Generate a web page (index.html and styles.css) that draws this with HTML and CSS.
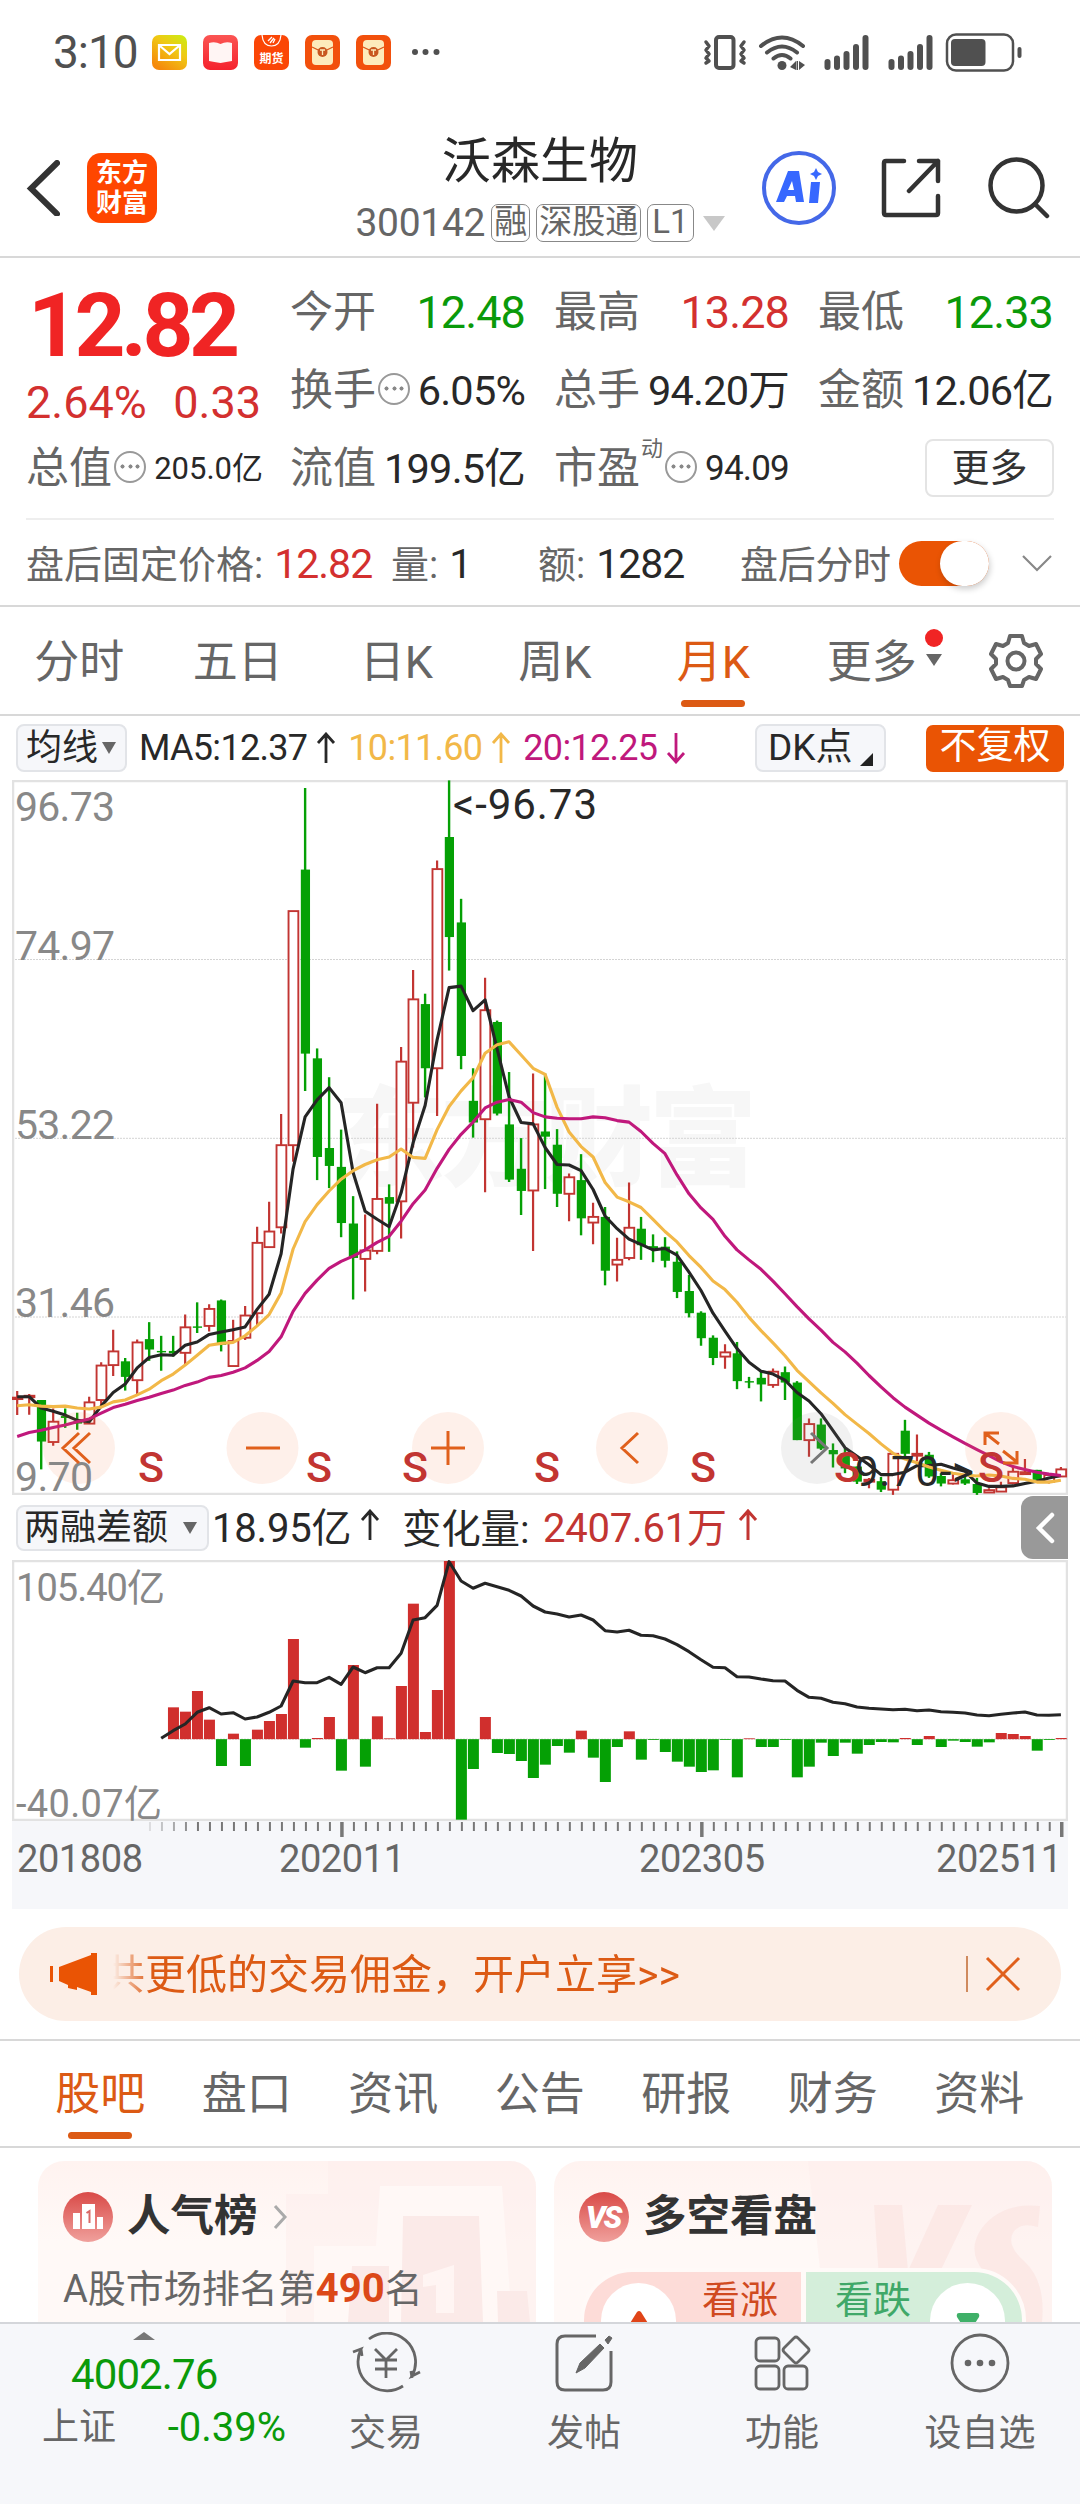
FILE: index.html
```
<!DOCTYPE html>
<html lang="zh-CN">
<head>
  <meta charset="UTF-8">
  <meta name="viewport" content="width=device-width, initial-scale=1">
  <title>沃森生物 300142</title>
  <link rel="stylesheet" href="styles.css">
</head>
<body>
  <!-- Status bar -->
  <div class="status-bar">
    <span class="clock">3:10</span>
    <div class="app-icons">
      <svg width="35" height="35" viewBox="0 0 35 35">
        <defs>
          <linearGradient id="mail" x1="1" y1="0" x2="0.3" y2="1"><stop offset="0" stop-color="#c8f014"/><stop offset="0.45" stop-color="#f0c814"/><stop offset="1" stop-color="#f58a0c"/></linearGradient>
          <linearGradient id="book" x1="0" y1="0" x2="0" y2="1"><stop offset="0" stop-color="#fb5553"/><stop offset="1" stop-color="#f5222d"/></linearGradient>
        </defs>
        <rect width="35" height="35" rx="7" fill="url(#mail)"/>
        <path d="M7 10h21v15H7zM8 11l9.500 8L27 11" fill="none" stroke="#fff" stroke-width="2.200"/>
      </svg>
      <svg width="35" height="35" viewBox="0 0 35 35">
        <rect width="35" height="35" rx="7" fill="url(#book)"/>
        <path d="M6 8q6-2 11.500 1Q23 6 29 8v18q-6 1-11.500 2Q11 27 6 26z" fill="#fff5f4"/>
      </svg>
      <svg width="35" height="35" viewBox="0 0 35 35">
        <rect width="35" height="35" rx="7" fill="#fb4606"/>
        <path d="M8 0q1 11 9.500 11T27 0" fill="none" stroke="#fff" stroke-width="1.200"/>
        <path d="M14 6l4-4M16 8l4-5M19 8l2-4" stroke="#fff" stroke-width="1.300"/>
        <text x="17.500" y="28" text-anchor="middle" font-size="12" font-weight="700" fill="#fff">期货</text>
      </svg>
      <svg width="35" height="35" viewBox="0 0 35 35">
        <rect width="35" height="35" rx="7" fill="#f2500c"/>
        <rect x="7" y="5" width="21" height="25" rx="4" fill="#fdebbb"/>
        <path d="M7 12l10.500 5L28 12" fill="none" stroke="#d9581c" stroke-width="1.300"/>
        <circle cx="17.500" cy="17" r="5" fill="#c8571f"/>
        <path d="M15 15h5M17.500 15v5" stroke="#fdebbb" stroke-width="1.300"/>
      </svg>
      <svg width="35" height="35" viewBox="0 0 35 35">
        <rect width="35" height="35" rx="7" fill="#f2500c"/>
        <rect x="7" y="5" width="21" height="25" rx="4" fill="#fdebbb"/>
        <path d="M7 12l10.500 5L28 12" fill="none" stroke="#d9581c" stroke-width="1.300"/>
        <circle cx="17.500" cy="17" r="5" fill="#c8571f"/>
        <path d="M15 15h5M17.500 15v5" stroke="#fdebbb" stroke-width="1.300"/>
      </svg>
      <svg class="more-dots" width="30" height="8" viewBox="0 0 30 8" fill="#505050"><circle cx="4" cy="4" r="3"/><circle cx="14.500" cy="4" r="3"/><circle cx="25.500" cy="4" r="3"/></svg>
    </div>
    <svg class="system-icons" width="325" height="42" viewBox="700 30 325 42" fill="#505050">
      <g fill="none" stroke="#505050" stroke-width="4" stroke-linecap="round" stroke-linejoin="round">
        <rect x="716" y="36" width="17.500" height="31" rx="3"/>
        <path d="M706 41l3 4-3 4 3 4-3 4 3 3-3 2M744 41l-3 4 3 4-3 4 3 4-3 3 3 2" stroke-width="3.500"/>
        <path d="M761 45q21-17 42 0M767 51.500q15-12 30 0M773.500 57.500q8.500-7 17 0"/>
        <rect x="947" y="33.500" width="66" height="36" rx="9" stroke-width="2.500"/>
      </g>
      <circle cx="782" cy="64.500" r="4.500"/>
      <path d="M790 66l6-6v9zM799 60l6 4-6 5zM796.500 60h1.500v9h-1.500z"/>
      <g>
        <rect x="824.500" y="58" width="6" height="11" rx="3"/><rect x="834" y="54.500" width="6" height="14.500" rx="3"/><rect x="843.500" y="50" width="6" height="19" rx="3"/><rect x="853" y="43" width="6" height="26" rx="3"/><rect x="862.500" y="34" width="6" height="35" rx="3"/>
        <rect x="888.500" y="58" width="6" height="11" rx="3"/><rect x="898" y="54.500" width="6" height="14.500" rx="3"/><rect x="907.500" y="50" width="6" height="19" rx="3"/><rect x="917" y="43" width="6" height="26" rx="3"/><rect x="926.500" y="34" width="6" height="35" rx="3"/>
      </g>
      <rect x="951" y="38" width="34.500" height="27" rx="4"/>
      <rect x="1017.500" y="46" width="4" height="11" rx="2"/>
    </svg>
  </div>

  <!-- Header -->
  <header class="header">
    <div class="header-left">
      <svg width="34" height="56" viewBox="0 0 34 56"><path d="M31 3L5 28.500 31 54" fill="none" stroke="#333" stroke-width="6" stroke-linecap="round"/></svg>
      <div class="brand"><span>东方</span><span>财富</span></div>
    </div>
    <div class="header-title">
      <h1>沃森生物</h1>
      <div class="code-row">
        <span class="code">300142</span>
        <span class="tag">融</span><span class="tag">深股通</span><span class="tag tag-l1">L1</span>
        <i class="tri tri-light"></i>
      </div>
    </div>
    <div class="header-right">
      <svg width="74" height="74" viewBox="0 0 74 74">
        <circle cx="37" cy="37" r="35" fill="none" stroke="#4468e8" stroke-width="4"/>
        <path fill="#3768ff" fill-rule="evenodd" d="M26 20h11l5 31h-8l-1-6h-8l-3 6h-8zM30 30l-4 9h6zM49 31h9l-2 21h-9zM54 17l2 4 4 2-4 2-2 4-2-4-4-2 4-2z"/>
      </svg>
      <svg width="60" height="60" viewBox="0 0 60 60" fill="none" stroke="#333" stroke-width="4.500" stroke-linecap="round" stroke-linejoin="round"><path d="M23 3H5q-2 0-2 2v50q0 2 2 2h50q2 0 2-2V38M38 3h19v20M57 3L28 33"/></svg>
      <svg width="62" height="62" viewBox="0 0 62 62" fill="none" stroke="#333" stroke-width="4.500" stroke-linecap="round"><circle cx="28.500" cy="28.500" r="26"/><path d="M47 47l12 12"/></svg>
    </div>
  </header>

  <!-- Quote -->
  <section class="quote">
    <div class="quote-grid">
      <div class="price">
        <div class="price-main">12.82</div>
        <div class="price-change"><span>2.64%</span><span>0.33</span></div>
      </div>
      <div class="cell"><label>今开</label><b class="green big">12.48</b></div>
      <div class="cell"><label>最高</label><b class="red big">13.28</b></div>
      <div class="cell"><label>最低</label><b class="green big">12.33</b></div>
      <div class="cell"><label>换手<i class="info"></i></label><b>6.05%</b></div>
      <div class="cell"><label>总手</label><b>94.20万</b></div>
      <div class="cell"><label>金额</label><b>12.06亿</b></div>
      <div class="cell"><label>总值<i class="info"></i></label><b class="small">205.0亿</b></div>
      <div class="cell"><label>流值</label><b>199.5亿</b></div>
      <div class="cell"><label>市盈<sup>动</sup><i class="info"></i></label><b class="mid">94.09</b></div>
      <div class="cell cell-more"><button class="more-btn">更多</button></div>
    </div>
    <div class="after-row">
      <div>盘后固定价格:<b class="red">12.82</b></div>
      <div>量:<b>1</b></div>
      <div>额:<b>1282</b></div>
      <div class="tight">盘后分时</div>
      <div><span class="switch"></span></div>
      <svg width="32" height="20" viewBox="0 0 32 20"><path d="M2 3l14 14L30 3" fill="none" stroke="#888" stroke-width="2.200"/></svg>
    </div>
  </section>

  <!-- Period tabs -->
  <nav class="period-tabs">
    <span>分时</span><span>五日</span><span>日K</span><span>周K</span><span class="active">月K</span>
    <span class="with-badge">更多<i class="badge"></i><i class="tri tri-badge"></i></span>
    <svg width="54" height="56" viewBox="0 0 54 56" fill="none" stroke="#666" stroke-width="4" stroke-linejoin="round"><path d="M21 3h12l2 7 5 3 7-2 5 10-5 5v5l5 5-5 10-7-2-5 3-2 6H21l-2-6-5-3-7 2-5-10 5-5v-5l-5-5 5-10 7 2 5-3z"/><circle cx="27" cy="28" r="8.500"/></svg>
  </nav>

  <!-- Moving averages -->
  <div class="ma-row">
    <span class="pill">均线<i class="tri"></i></span>
    <div class="ma-values">
      <span>MA5:12.37<svg class="arrow" viewBox="0 0 20 32"><path d="M10 31V2M2 11l8-9 8 9"/></svg></span>
      <span class="ma10">10:11.60<svg class="arrow" viewBox="0 0 20 32"><path d="M10 31V2M2 11l8-9 8 9"/></svg></span>
      <span class="ma20">20:12.25<svg class="arrow" viewBox="0 0 20 32"><path d="M10 1v29M2 21l8 9 8-9"/></svg></span>
    </div>
    <span class="pill pill-dk">DK点<i class="corner"></i></span>
    <span class="pill-orange">不复权</span>
  </div>

  <svg class="plot" id="kline" width="1056" height="715" viewBox="12 780 1056 715"></svg>

  <div class="indicator-row">
    <span class="pill">两融差额<i class="tri"></i></span>
    <span class="balance">18.95亿<svg class="arrow" viewBox="0 0 20 32"><path d="M10 31V2M2 11l8-9 8 9"/></svg></span>
    <span class="delta-label">变化量:</span>
    <span class="delta">2407.61万<svg class="arrow" viewBox="0 0 20 32"><path d="M10 31V2M2 11l8-9 8 9"/></svg></span>
    <span class="drawer"><svg width="20" height="32" viewBox="0 0 20 32"><path d="M17 3L4 16l13 13" fill="none" stroke="#fff" stroke-width="4.500" stroke-linecap="round"/></svg></span>
  </div>

  <svg class="plot" id="margin" width="1056" height="261" viewBox="12 1560 1056 261"></svg>
  <svg class="plot axis" id="axis" width="1056" height="88" viewBox="12 1821 1056 88"></svg>

  <!-- Promo -->
  <div class="promo">
    <svg width="48" height="42" viewBox="0 0 48 42" fill="#ea5404"><path d="M0 13h3v16H0zM9 14L41 2V0h6v42h-6v-3l-14-5v3l-9-2v-3l-9-4z"/></svg>
    <div class="promo-text">共更低的交易佣金，开户立享&gt;&gt;</div>
    <div class="promo-close"><svg width="36" height="36" viewBox="0 0 36 36"><path d="M2 2l32 32M34 2L2 34" stroke="#e0601c" stroke-width="3"/></svg></div>
  </div>

  <!-- Content tabs -->
  <nav class="content-tabs">
    <span class="active">股吧</span><span>盘口</span><span>资讯</span><span>公告</span><span>研报</span><span>财务</span><span>资料</span>
  </nav>

  <div class="cards">
    <div class="card">
      <svg class="card-bg" width="260" height="161" viewBox="0 0 260 161">
        <path d="M52 0h208v161H10V33h42z" fill="#fdeeec" opacity="0.6"/>
        <path d="M104 25h122l10 136H38V85h62z" fill="#fff8f6"/>
        <path d="M127 55h76l4 106h-82zM76 105h37v56H72zM221 130h30l3 31h-32z" fill="#fbeae8"/>
        <path d="M178 104v48h-18v-28l-13 2v-12z" fill="#fff5f3"/>
      </svg>
      <div class="card-head">
        <svg width="50" height="50" viewBox="0 0 50 50">
          <defs><linearGradient id="rank" x1="0" y1="0" x2="0" y2="1"><stop offset="0" stop-color="#d94a47"/><stop offset="1" stop-color="#f0a09c"/></linearGradient></defs>
          <circle cx="25" cy="25" r="25" fill="url(#rank)"/>
          <path d="M10 21h7v16h-7zM19 12h13v25H19zM34 25h6v12h-6z" fill="#fff"/>
          <path d="M23.500 21l3-2v12" fill="none" stroke="#d96a67" stroke-width="2"/>
        </svg>
        <h2>人气榜</h2>
        <svg width="16" height="26" viewBox="0 0 16 26"><path d="M3 2l10 11L3 24" fill="none" stroke="#aaa" stroke-width="3"/></svg>
      </div>
      <p class="card-sub">A股市场排名第<b>490</b>名</p>
    </div>
    <div class="card">
      <svg class="card-bg" width="260" height="161" viewBox="0 0 260 161">
        <path d="M16 0h244v161H34z" fill="#fdeeec" opacity="0.6"/>
        <path d="M82 44h28l6 66 30-66h34l-56 117H90z" fill="#fbe6e4" opacity="0.8"/>
        <path d="M246 66q-20-6-26 8-4 12 12 26 22 20 18 61h-84q24 0 34-14 10-18-8-36-18-22-2-44 20-26 58-22z" fill="#fbe6e4" opacity="0.8"/>
      </svg>
      <div class="card-head">
        <svg width="50" height="50" viewBox="0 0 50 50">
          <circle cx="25" cy="25" r="25" fill="url(#rank)"/>
          <text x="24" y="36" text-anchor="middle" font-size="31" font-weight="900" font-style="italic" letter-spacing="-2" fill="#fff">VS</text>
        </svg>
        <h2>多空看盘</h2>
      </div>
      <div class="vote">
        <div class="vote-side up"><i class="knob"><svg width="24" height="22" viewBox="0 0 24 22"><path d="M10 2q2-2 4 0l10 16H0z" fill="#e04418"/></svg></i>看涨</div>
        <div class="vote-side down">看跌<i class="knob"><svg width="24" height="20" viewBox="0 0 24 20"><path d="M3 0h18q3 0 2 4L14 18h-4L1 4Q0 0 3 0z" fill="#3fb068"/></svg></i></div>
      </div>
    </div>
  </div>

  <!-- Bottom bar -->
  <footer class="bottom-bar">
    <div class="index">
      <i class="tri tri-up"></i>
      <div class="index-value">4002.76</div>
      <div class="index-row"><span>上证</span><b>-0.39%</b></div>
    </div>
    <div class="action">
      <svg width="70" height="62" viewBox="0 0 70 62" fill="none" stroke="#666" stroke-width="2.800"><path d="M18 7a29 29 0 0 1 43 37l8-4M61 46l-1-7M52 54A29 29 0 0 1 10 17L2 20M10 17l1 7M24 17l11 11 11-11M35 28v18M24 28h22M24 37h22"/></svg>
      <span>交易</span>
    </div>
    <div class="action">
      <svg width="60" height="62" viewBox="0 0 60 62" fill="none" stroke="#666" stroke-width="3"><path d="M42 4H11q-8 0-8 8v38q0 8 8 8h38q8 0 8-8V19"/><path d="M22 41l4-10 20-19 4 4-19 20zM51 8l4-4 3 2-4 6z" fill="#666" stroke-width="1"/></svg>
      <span>发帖</span>
    </div>
    <div class="action">
      <svg width="60" height="62" viewBox="0 0 60 62" fill="none" stroke="#666" stroke-width="2.800"><rect x="4" y="6" width="23" height="23" rx="4"/><rect x="4" y="34" width="23" height="23" rx="4"/><rect x="32" y="34" width="23" height="23" rx="4"/><path d="M42 6q2-2 4 0l10 10q2 2 0 4L46 30q-2 2-4 0L32 20q-2-2 0-4z"/></svg>
      <span>功能</span>
    </div>
    <div class="action">
      <svg width="62" height="62" viewBox="0 0 62 62"><circle cx="31" cy="31" r="28" fill="none" stroke="#666" stroke-width="2.800"/><g fill="#666"><circle cx="19" cy="31" r="3.300"/><circle cx="31" cy="31" r="3.300"/><circle cx="43" cy="31" r="3.300"/></g></svg>
      <span>设自选</span>
    </div>
  </footer>

  <script src="chart.js"></script>
</body>
</html>
```
FILE: styles.css
```
*, *::before, *::after { margin: 0; padding: 0; box-sizing: border-box; }
body {
  width: 1080px;
  height: 2504px;
  overflow: hidden;
  background: #fff;
  color: #666;
  font-family: Roboto, "Noto Sans CJK SC", sans-serif;
  white-space: nowrap;
}
svg { display: block; flex: none; }
i { font-style: normal; }
.red { color: #d3302f; }
.green { color: #0a9a0a; }

/* Small triangles */
.tri {
  display: block;
  flex: none;
  border: 7px solid transparent;
  border-top: 12px solid #666;
  border-bottom: 0;
}
.tri-light {
  border-width: 15px 11px 0;
  border-top-color: #c8c8c8;
}

/* Status bar */
.status-bar {
  display: flex;
  align-items: center;
  height: 104px;
  padding: 0 55px 0 53px;
  color: #505050;
}
.clock {
  width: 99px;
  font-size: 46px;
  letter-spacing: -1px;
}
.app-icons {
  display: flex;
  align-items: center;
  gap: 16px;
}
.more-dots { margin-left: 4px; }
.system-icons { margin-left: auto; }

/* Header */
.header {
  display: grid;
  grid-template-columns: 328px 1fr 328px;
  height: 154px;
  border-bottom: 2px solid #d8d8d8;
}
.header-left {
  display: flex;
  align-items: center;
  gap: 27px;
  padding: 15px 0 0 26px;
}
.brand {
  display: flex;
  flex-direction: column;
  align-items: center;
  justify-content: center;
  width: 70px;
  height: 70px;
  border-radius: 14px;
  background: #ff4600;
  color: #fff;
  font-size: 26px;
  font-weight: 700;
  line-height: 30px;
}
.header-title {
  display: flex;
  flex-direction: column;
  align-items: center;
}
.header-title h1 {
  margin-top: 28px;
  color: #282828;
  font-size: 49px;
  font-weight: 400;
  line-height: 60px;
}
.code-row {
  display: flex;
  align-items: center;
  gap: 6px;
  height: 40px;
  margin-top: 11px;
}
.code { font-size: 39px; letter-spacing: -0.300px; }
.tag {
  height: 38px;
  padding: 0 2px;
  border: 1.500px solid #888;
  border-radius: 7px;
  font-size: 33px;
  line-height: 34px;
}
.tag-l1 { padding: 0 4px; }
.code-row .tri { margin-left: 3px; }
.header-right {
  display: flex;
  align-items: center;
  padding: 15px 0 0 10px;
}
.header-right svg:nth-child(2) { margin: 0 47px 0 45px; }

/* Quote */
.quote {
  height: 349px;
  padding: 16px 26px 0;
  border-bottom: 2px solid #d8d8d8;
}
.quote-grid {
  display: grid;
  grid-template-columns: repeat(4, 235px);
  grid-template-rows: repeat(3, 78px);
  column-gap: 29px;
}
.price {
  grid-row: span 2;
  color: #d3302f;
}
.price-main {
  height: 105px;
  padding-left: 2px;
  color: #f02424;
  font-size: 89px;
  font-weight: 700;
  letter-spacing: -4.500px;
  line-height: 103px;
}
.price-change {
  display: flex;
  justify-content: space-between;
  font-size: 45px;
  line-height: 48px;
}
.cell {
  display: flex;
  align-items: center;
  justify-content: space-between;
  line-height: 78px;
}
.cell label {
  display: flex;
  align-items: center;
  font-size: 43px;
  line-height: 74px;
  margin-top: -3px;
}
.cell b {
  color: #282828;
  font-size: 41.500px;
  font-weight: 400;
  letter-spacing: -0.800px;
}
.cell b.big { font-size: 45px; letter-spacing: -0.900px; }
.cell b.green { color: #0a9a0a; }
.cell b.red { color: #d3302f; }
.cell b.small { margin-right: -2px; font-size: 31px; letter-spacing: 0; }
.cell b.mid { font-size: 35px; }
.cell sup {
  align-self: flex-start;
  margin: -4px 0 0 1px;
  font-size: 22px;
  line-height: 44px;
}
.info {
  display: block;
  width: 32px;
  height: 32px;
  margin: -2px 0 0 2px;
  border: 2px solid #999;
  border-radius: 50%;
  background: radial-gradient(circle, #888 1.800px, transparent 2.300px) center / 7px 7px no-repeat,
    radial-gradient(circle, #888 1.800px, transparent 2.300px) 3px center / 7px 7px no-repeat,
    radial-gradient(circle, #888 1.800px, transparent 2.300px) 18px center / 7px 7px no-repeat;
}
.cell-more { justify-content: flex-end; }
.more-btn {
  width: 129px;
  height: 58px;
  margin: -3px -1px 0 0;
  border: 2px solid #e4e4e4;
  border-radius: 8px;
  background: #fff;
  color: #333;
  font: 38px/50px Roboto, "Noto Sans CJK SC", sans-serif;
}
.after-row {
  display: grid;
  grid-template-columns: 365px 147px 202px 159px 122px 32px;
  align-items: center;
  height: 88px;
  margin-top: 10px;
  border-top: 2px solid #eee;
  font-size: 38px;
}
.after-row div:not(:nth-child(5)) { margin-top: -3px; }
.after-row b {
  margin-left: 11px;
  font-size: 41px;
  font-weight: 400;
  letter-spacing: -1px;
}
.after-row b:not(.red) { color: #282828; }
.after-row .tight { letter-spacing: -0.300px; }
.switch {
  display: block;
  width: 90px;
  height: 45px;
  border-radius: 23px;
  background: #ea5404;
  padding-left: 41px;
}
.switch::after {
  content: "";
  display: block;
  width: 49px;
  height: 45px;
  border-radius: 23px;
  background: #fff;
  box-shadow: 1px 3px 6px rgba(0, 0, 0, 0.2);
}

/* Period tabs */
.period-tabs {
  display: flex;
  align-items: center;
  height: 109px;
  border-bottom: 2px solid #d8d8d8;
  font-size: 45px;
}
.period-tabs span, .content-tabs span {
  position: relative;
  width: 158.500px;
  text-align: center;
  line-height: 107px;
}
.period-tabs span { line-height: 112px; height: 107px; }
.period-tabs .active, .content-tabs .active { color: #dc5a14; }
.active::after {
  content: "";
  position: absolute;
  left: 50%;
  bottom: 7px;
  width: 64px;
  height: 7px;
  margin-left: -32px;
  border-radius: 4px;
  background: #dc5a14;
}
.period-tabs .active::after { bottom: 7px; }
.period-tabs svg { margin-left: 38px; }
.badge {
  position: absolute;
  top: 22px;
  right: 8px;
  width: 18px;
  height: 18px;
  border-radius: 50%;
  background: #f02424;
}
.tri-badge {
  position: absolute;
  top: 47px;
  right: 9px;
  border-width: 12px 8px 0;
}

/* Average row */
.ma-row {
  display: flex;
  align-items: center;
  height: 64px;
  padding-left: 16px;
  color: #282828;
  font-size: 36px;
}
.pill {
  display: flex;
  flex: none;
  align-items: center;
  gap: 4px;
  height: 48px;
  padding: 0 8px;
  border: 2px solid #e2e4e8;
  border-radius: 8px;
  background: #f6f7fa;
  color: #282828;
  font-size: 36px;
  line-height: 42px;
}
.ma-row .pill:first-child { width: 111px; }
.ma-values {
  display: flex;
  flex: none;
  width: 628px;
  padding-left: 12px;
  letter-spacing: -0.700px;
}
.ma-values span {
  display: flex;
  align-items: center;
  margin-right: 12px;
}
.arrow {
  width: 20px;
  height: 32px;
  margin-left: 9px;
  fill: none;
  stroke: currentColor;
  stroke-width: 2.800;
}
.ma10 { color: #f2b848; }
.ma20 { color: #c0187c; }
.pill-dk { width: 131px; padding: 0 4px 0 11px; gap: 7px; font-size: 37px; }
.corner {
  align-self: flex-end;
  margin-bottom: 4px;
  border-left: 13px solid transparent;
  border-bottom: 13px solid #222;
}
.pill-orange {
  width: 138px;
  height: 47px;
  margin-left: 40px;
  border-radius: 7px;
  background: #ea5404;
  color: #fff;
  font-size: 37px;
  line-height: 43px;
  text-align: center;
}

/* Plots */
.plot { margin-left: 12px; }
.plot .frame { fill: none; stroke: #e2e2e2; stroke-width: 2.500; }
.plot .grid { stroke: #d4d4d4; stroke-width: 1; stroke-dasharray: 2 1; }
.plot .scale { fill: #888; font-size: 41px; }
.plot .scale.unit { font-size: 38px; }
.plot .mark { fill: #282828; font-size: 42px; }
.plot .signal { fill: #c23532; font-size: 43px; font-weight: 500; text-anchor: middle; }
.plot .watermark { fill: #f7f7f7; font-size: 108px; font-weight: 900; }
.plot .line { fill: none; stroke-width: 3.100; stroke-linejoin: round; }
.plot .tool { fill: none; stroke: #e0601c; stroke-width: 3; }
.plot .tool.off { stroke: #777; }
.plot .date { fill: #666; font-size: 38px; }
.axis { background: #f6f7fa; }

/* Indicator row */
.indicator-row {
  display: flex;
  align-items: center;
  height: 65px;
  padding-left: 16px;
  color: #282828;
  font-size: 40px;
}
.indicator-row .pill {
  width: 193px;
  height: 46px;
  padding: 0 6px;
  gap: 15px;
}
.balance, .delta { display: flex; align-items: center; }
.balance, .delta, .delta-label { margin-top: -5px; letter-spacing: -0.200px; }
.balance { width: 190px; margin-left: 3px; }
.delta-label { width: 141px; margin-left: 0; font-size: 39.500px; }
.delta { color: #c23532; }
.delta .arrow { margin-left: 11px; stroke-width: 3; }
.drawer {
  display: flex;
  align-items: center;
  justify-content: center;
  width: 47px;
  height: 63px;
  margin: 0 12px 0 auto;
  border-radius: 12px 0 0 12px;
  background: #999;
}

/* Promo */
.promo {
  display: flex;
  align-items: center;
  height: 94px;
  margin: 18px 19px;
  padding: 0 40px 0 31px;
  border-radius: 48px;
  background: #fceee6;
  color: #dc5a14;
}
.promo-text {
  margin: -7px 0 0 15px;
  overflow: hidden;
  font-size: 41px;
  text-indent: -9px;
  -webkit-mask-image: linear-gradient(90deg, transparent, #000 38px);
  mask-image: linear-gradient(90deg, transparent, #000 38px);
}
.promo-close {
  margin-left: auto;
  padding-left: 17px;
  border-left: 2px solid #cf8a5e;
}

/* Content tabs */
.content-tabs {
  display: flex;
  height: 109px;
  padding-left: 27px;
  border-top: 2px solid #d8d8d8;
  border-bottom: 2px solid #d8d8d8;
  font-size: 45px;
}
.content-tabs span { width: 146.500px; }

/* Cards */
.cards {
  display: flex;
  gap: 18px;
  height: 174px;
  padding: 13px 0 0 38px;
  overflow: hidden;
}
.card {
  position: relative;
  flex: none;
  width: 498px;
  height: 220px;
  padding: 31px 26px 0 25px;
  overflow: hidden;
  border-radius: 26px;
  background: linear-gradient(#fff3f0, #fff9f7 80px);
}
.card-bg {
  position: absolute;
  top: 0;
  right: 0;
}
.card-head {
  position: relative;
  display: flex;
  align-items: center;
  gap: 14px;
  height: 50px;
}
.card-head h2 {
  color: #333;
  font-size: 43.500px;
  font-weight: 700;
  line-height: 50px;
}
.card-sub {
  position: relative;
  margin-top: 20px;
  font-size: 38px;
  line-height: 54px;
}
.card-sub b { color: #dc4818; font-size: 40px; }
.vote {
  position: relative;
  display: flex;
  gap: 5px;
  width: 446px;
  height: 104px;
  margin: 26px 0 0 1px;
  border: 4px solid #fffaf8;
  border-radius: 52px;
  background: #fffaf8;
  font-size: 38px;
}
.vote-side {
  display: flex;
  flex: 1;
  padding: 11px 17px;
  line-height: 34px;
}
.up { gap: 26px; border-radius: 48px 0 0 48px; background: #fddcd8; color: #d04a20; }
.down { justify-content: flex-end; gap: 19px; border-radius: 0 48px 48px 0; background: #d4eeda; color: #3fa868; }
.knob {
  display: flex;
  justify-content: center;
  width: 75px;
  height: 75px;
  padding-top: 27px;
  border-radius: 50%;
  background: #fff;
}
.down .knob { padding-top: 30px; }

/* Bottom bar */
.bottom-bar {
  display: flex;
  height: 183px;
  border-top: 2px solid #d4d6da;
  background: #f6f7fa;
}
.index {
  width: 287px;
  color: #0a9a0a;
}
.tri-up {
  width: 0;
  margin: 8px 0 0 133px;
  border-width: 0 11px 8px;
  border-bottom: 8px solid #777;
}
.index-value {
  margin-top: 11px;
  padding-left: 71px;
  font-size: 42px;
  letter-spacing: -0.900px;
  line-height: 48px;
}
.index-row {
  display: flex;
  justify-content: space-between;
  margin-top: 4px;
  padding: 0 1px 0 42px;
  font-size: 37px;
  line-height: 50px;
}
.index-row span { color: #666; }
.index-row b { font-size: 40px; font-weight: 400; }
.action {
  display: flex;
  flex-direction: column;
  align-items: center;
  width: 198px;
  padding-top: 8px;
  font-size: 37px;
}
.action span { margin-top: 13px; line-height: 54px; }
```
FILE: chart.js
```
const RED = '#c23532';
const GREEN = '#05a005';
const STEP = 11.997;
const xAt = i => 17.2 + STEP * i;
const yMain = v => 770 + v / 2.119;
const ySub = v => 1480 + v / 3;

// One row per month from 201808: [direction, body top, body bottom, high, low]
const candles = [
  ['r',1330,1333,1316,1367],['r',1326,1329,1322,1366],['g',1335,1423,1335,1482],['r',1381,1424,1353,1432],
  ['g',1369,1373,1353,1394],['g',1381,1385,1362,1398],['r',1340,1385,1328,1385],['r',1262,1335,1255,1350],
  ['r',1232,1261,1186,1284],['g',1253,1286,1246,1315],['r',1213,1293,1207,1322],['g',1206,1228,1170,1252],
  ['g',1231,1234,1199,1273],['g',1231,1236,1199,1243],['r',1181,1235,1154,1262],['g',1179,1182,1128,1193],
  ['r',1142,1178,1132,1190],['g',1124,1218,1122,1232],['r',1210,1263,1165,1263],['r',1156,1203,1136,1208],
  ['r',1002,1151,968,1178],['r',978,1011,915,1013],['r',795,969,729,982],['r',299,795,299,830],
  ['g',211,601,38,680],['g',611,820,590,869],['g',801,839,651,886],['g',841,960,762,990],
  ['g',961,1034,903,1122],['r',1018,1036,942,1105],['r',909,1019,707,1026],['g',905,919,878,1021],
  ['r',618,914,587,993],['r',486,705,424,800],['g',496,632,474,694],['r',210,632,192,733],
  ['g',142,354,22,425],['g',323,606,273,634],['g',701,747,632,779],['r',509,740,440,895],
  ['g',534,728,531,732],['g',751,868,640,873],['g',845,892,780,943],['r',751,891,643,1019],
  ['g',766,777,643,888],['g',794,898,761,926],['r',863,898,855,956],['g',869,950,814,986],
  ['r',947,959,917,1005],['g',947,1061,926,1092],['r',1038,1048,991,1084],['r',970,1034,874,1039],
  ['g',972,1007,947,1038],['g',1009,1013,984,1043],['g',1010,1040,990,1054],['g',1042,1106,1020,1119],
  ['g',1104,1151,1070,1160],['g',1150,1204,1147,1220],['g',1203,1246,1198,1261],['r',1234,1243,1217,1269],
  ['g',1236,1295,1212,1312],['g',1295,1298,1286,1310],['g',1288,1302,1272,1338],['r',1275,1303,1268,1309],
  ['g',1276,1298,1264,1335],['g',1298,1420,1295,1420],['r',1386,1420,1374,1455],['g',1387,1438,1374,1441],
  ['g',1441,1450,1427,1478],['g',1448,1480,1437,1490],['g',1476,1508,1476,1513],['r',1504,1508,1500,1522],
  ['g',1507,1525,1498,1530],['r',1449,1525,1449,1536],['g',1400,1449,1377,1460],['r',1449,1453,1408,1465],
  ['g',1451,1497,1445,1500],['g',1496,1512,1490,1518],['r',1505,1512,1490,1514],['g',1503,1512,1495,1515],
  ['g',1513,1532,1500,1536],['r',1526,1531,1522,1532],['r',1520,1529,1508,1530],['r',1487,1511,1477,1514],
  ['r',1488,1492,1460,1494],['g',1483,1504,1483,1505],['r',1494,1508,1490,1512],['r',1482,1497,1477,1498]
];

const ma5 = [1328,1328,1352,1359,1367,1378,1381,1348,1319,1301,1267,1245,1239,1240,1219,1212,1196,1191,1186,1180,1143,1111,1025,845,735,699,673,705,853,935,952,968,896,790,711,572,461,458,510,487,591,693,747,750,800,836,837,849,889,945,972,994,1005,1017,1014,1028,1064,1103,1151,1189,1226,1255,1274,1280,1293,1319,1337,1364,1400,1436,1454,1472,1493,1493,1488,1474,1474,1471,1479,1486,1511,1518,1518,1517,1512,1507,1500,1495];
const ma10 = [1347,1345,1348,1349,1348,1352,1354,1350,1339,1335,1324,1312,1294,1280,1261,1240,1219,1215,1213,1199,1178,1154,1108,1015,957,921,892,867,849,836,826,820,803,821,823,762,713,680,652,600,582,576,604,632,645,715,767,798,820,874,905,915,927,952,978,1000,1029,1054,1083,1101,1128,1160,1188,1214,1241,1272,1296,1320,1342,1366,1386,1406,1428,1448,1460,1468,1477,1484,1490,1494,1496,1494,1496,1501,1503,1509,1509,1505];
const ma20 = [1412,1404,1399,1393,1388,1381,1375,1363,1351,1344,1336,1329,1321,1314,1304,1297,1287,1283,1276,1267,1251,1232,1201,1147,1109,1081,1056,1041,1030,1017,1001,988,956,919,890,844,804,772,746,716,704,698,704,726,735,738,739,739,735,737,743,746,766,791,813,858,898,928,952,988,1017,1038,1058,1083,1110,1137,1163,1187,1213,1233,1257,1283,1307,1330,1350,1367,1384,1399,1413,1427,1440,1453,1466,1476,1482,1488,1492,1495];

// Margin balance starts at month 12, monthly change at month 13
const balance = [775,752,732,697,683,702,698,717,711,697,678,603,608,608,592,613,561,578,563,563,520,420,413,376,245,303,325,310,320,331,348,378,396,402,411,405,420,452,456,451,466,467,477,494,515,539,562,563,590,591,597,602,603,631,652,655,667,671,681,685,687,689,688,692,690,695,697,699,705,707,703,699,696,705,706,704];
const change = [682,695,633,719,858,761,858,749,723,702,477,803,774,711,872,555,860,709,775,618,371,756,630,243,1019,867,711,819,822,843,894,854,798,818,752,833,906,801,754,839,780,816,845,860,876,871,780,892,775,801,801,780,892,860,788,828,788,821,795,786,787,774,795,768,801,782,786,800,787,759,762,768,812,780,774];

const polyline = (values, start, y, color) =>
  `<polyline class="line" stroke="${color}" points="${values.map((v, i) => xAt(i + start).toFixed(1) + ',' + y(v).toFixed(1)).join(' ')}"/>`;

function candle([dir, top, bottom, high, low], i) {
  const x = xAt(i), t = yMain(top), b = yMain(bottom);
  if (dir === 'g') {
    return `<path d="M${x} ${yMain(high)}V${yMain(low)}" stroke="${GREEN}" stroke-width="2.4"/><rect x="${x - 4.3}" y="${t}" width="9.2" height="${b - t}" fill="${GREEN}"/>`;
  }
  return `<path d="M${x} ${yMain(high)}V${t}M${x} ${b}V${yMain(low)}" stroke="${RED}" stroke-width="2.2"/><rect x="${x - 4.6}" y="${t}" width="9.8" height="${b - t}" fill="#fff" stroke="${RED}" stroke-width="1.9"/>`;
}

function drawKline() {
  let out = '<text class="watermark" x="337" y="1177" textLength="420">东方财富</text>';
  [959.5, 1138.3, 1317].forEach(y => { out += `<path class="grid" d="M12 ${y}H1068"/>`; });
  out += '<rect class="frame" x="13" y="781" width="1054" height="713"/>';
  out += candles.map(candle).join('');
  out += polyline(ma5, 0, yMain, '#252525') + polyline(ma10, 0, yMain, '#f2b848') + polyline(ma20, 0, yMain, '#c0187c');
  [79, 262.5, 448, 632, 817, 1001].forEach((x, i) => {
    out += `<circle cx="${x}" cy="1448" r="36" fill="${i === 4 ? '#808080' : '#f47a3c'}" opacity="0.11"/>`;
  });
  [['96.73', 821], ['74.97', 960], ['53.22', 1139], ['31.46', 1317]].forEach(([t, y]) => {
    out += `<text class="scale" x="15" y="${y}" textLength="100">${t}</text>`;
  });
  out += '<text class="scale" x="15" y="1491" textLength="78">9.70</text>';
  out += '<path class="tool" d="M79 1433l-16 15 16 15M90 1433l-16 15 16 15M246 1448h34M431 1448h34M448 1431v34M638 1433l-16 15 16 15M999 1444l-14-11M985 1445v-12h14M1003 1451l14 11M1017 1451v12h-14"/>';
  out += '<path class="tool off" d="M811 1433l16 15-16 15"/>';
  [151, 319, 415, 547, 703, 847, 991].forEach(x => { out += `<text class="signal" x="${x}" y="1482">S</text>`; });
  out += '<text class="mark" x="453" y="818.5" textLength="144">&lt;-96.73</text>';
  out += '<text class="mark" x="855" y="1486" textLength="119">9.70-&gt;</text>';
  document.getElementById('kline').innerHTML = out;
}

function drawMargin() {
  const zero = ySub(777.5);
  let out = '<rect class="frame" x="13" y="1561" width="1054" height="259"/>';
  out += `<path class="grid" d="M175 ${zero}H1068"/>`;
  out += '<text class="scale unit" x="16" y="1601" textLength="149">105.40亿</text>';
  out += '<text class="scale unit" x="16" y="1817" textLength="146">-40.07亿</text>';
  change.forEach((v, i) => {
    const y = ySub(v);
    out += `<rect x="${xAt(i + 13) - 5.2}" y="${Math.min(y, zero)}" width="11" height="${Math.abs(y - zero)}" fill="${v < 777 ? '#d02f2d' : GREEN}"/>`;
  });
  out += polyline(balance, 12, ySub, '#252525');
  document.getElementById('margin').innerHTML = out;
}

function drawAxis() {
  let out = '';
  for (let i = 11; i < 88; i++) {
    const major = i === 27 || i === 57 || i === 87;
    const x = xAt(i) + 0.8;
    out += `<path d="M${x} 1822V${major ? 1837 : 1831}" stroke="#777" stroke-width="${major ? 3.5 : 2}" opacity="${Math.min(1, (i - 10) / 5)}"/>`;
  }
  [[17, '201808'], [279, '202011'], [639, '202305'], [936, '202511']].forEach(([x, t]) => {
    out += `<text class="date" x="${x}" y="1872" textLength="126">${t}</text>`;
  });
  document.getElementById('axis').innerHTML = out;
}

drawKline();
drawMargin();
drawAxis();
```
